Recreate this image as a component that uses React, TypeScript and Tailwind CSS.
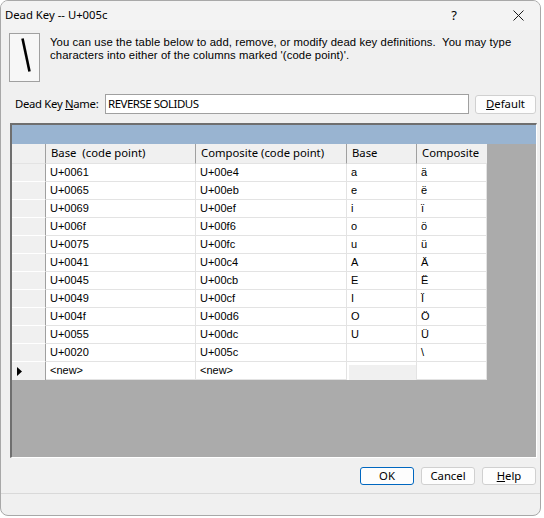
import React from 'react';

const rows = [
  { base: 'U+0061', comp: 'U+00e4', b: 'a', c: 'ä' },
  { base: 'U+0065', comp: 'U+00eb', b: 'e', c: 'ë' },
  { base: 'U+0069', comp: 'U+00ef', b: 'i', c: 'ï' },
  { base: 'U+006f', comp: 'U+00f6', b: 'o', c: 'ö' },
  { base: 'U+0075', comp: 'U+00fc', b: 'u', c: 'ü' },
  { base: 'U+0041', comp: 'U+00c4', b: 'A', c: 'Ä' },
  { base: 'U+0045', comp: 'U+00cb', b: 'E', c: 'Ë' },
  { base: 'U+0049', comp: 'U+00cf', b: 'I', c: 'Ï' },
  { base: 'U+004f', comp: 'U+00d6', b: 'O', c: 'Ö' },
  { base: 'U+0055', comp: 'U+00dc', b: 'U', c: 'Ü' },
  { base: 'U+0020', comp: 'U+005c', b: '', c: '\\' },
];

function Cell({ w, children }: { w: string; children?: React.ReactNode }) {
  return (
    <div className={`${w} h-full flex items-center pl-[4px] bg-white border-b border-r border-[#e3e3e3]`}>
      {children}
    </div>
  );
}

function HeaderCell({ w, children }: { w: string; children?: React.ReactNode }) {
  return (
    <div className={`${w} h-full flex items-center pl-[5px] bg-[#f0f0f0] border-r border-[#a0a0a0] border-b border-b-[#e3e3e3]`}>
      {children}
    </div>
  );
}

export default function App() {
  return (
    <div className="w-[544px] h-[518px] bg-white" style={{ fontFamily: '"Noto Sans", sans-serif' }}>
      <div className="w-[541px] h-[516px] bg-[#f0f0f0] border border-[#a8a8a8] rounded-lg overflow-hidden flex flex-col text-[11.3px] text-black">
        {/* Title bar */}
        <div className="h-[29px] flex items-center bg-[#f3f3f3] shrink-0">
          <span className="ml-[4px]">Dead Key -- U+005c</span>
          <span className="ml-auto mr-[56px] text-[13px]">?</span>
          <svg width="11" height="11" viewBox="0 0 11 11" className="mr-[16px]">
            <path d="M0.5 0.5 L10.5 10.5 M10.5 0.5 L0.5 10.5" stroke="#1a1a1a" strokeWidth="1" />
          </svg>
        </div>

        {/* Intro */}
        <div className="flex mt-[3px]">
          <div className="ml-[8px] w-[31px] h-[49px] border border-[#a0a0a0] bg-[#f7f7f7] flex items-center justify-center shrink-0">
            <svg width="10" height="34" viewBox="0 0 10 34" className="mt-[-6px] ml-[2px]">
              <path d="M1.5 0.5 L8.5 33.5" stroke="#000" strokeWidth="2.6" />
            </svg>
          </div>
          <div
            className="ml-[10px] mt-[3px] whitespace-nowrap text-[11.3px] tracking-[0.1px]"
            style={{ fontFamily: '"Liberation Sans", sans-serif' }}
          >
            <div className="h-[13px] leading-[13px]">
              You can use the table below to add, remove, or modify dead key definitions.&nbsp; You may type
            </div>
            <div className="h-[13px] leading-[13px]">characters into either of the columns marked '(code point)'.</div>
          </div>
        </div>

        {/* Name row */}
        <div className="flex items-center mt-[12px] h-[20px]">
          <span className="ml-[14px] w-[90px] whitespace-nowrap tracking-[-0.3px]">
            Dead Key <span className="underline">N</span>ame:
          </span>
          <div className="w-[364px] h-[20px] bg-white border border-[#a0a0a0] flex items-center pl-[2px] text-[11.5px] tracking-[-0.5px]">
            REVERSE SOLIDUS
          </div>
          <button className="ml-[6px] w-[61px] h-[19px] bg-[#fdfdfd] border border-[#d0d0d0] rounded-[3px] flex items-center justify-center">
            <span><span className="underline">D</span>efault</span>
          </button>
        </div>

        {/* Grid */}
        <div className="ml-[9px] mt-[9px] w-[527px] h-[335px] border-l-2 border-t-2 border-l-[#6f6f6f] border-t-[#6f6f6f] border-r border-b border-r-white border-b-white flex flex-col text-[11px]" style={{ fontFamily: '"Liberation Sans", sans-serif' }}>
          <div className="h-[19px] bg-[#99b4d1] shrink-0" />
          <div className="flex-1 bg-[#ababab]">
            <div className="w-[475px] flex h-[20px]" style={{ fontFamily: '"Noto Sans", sans-serif', fontSize: '11.3px' }}>
              <div className="w-[34px] h-full bg-[#f0f0f0] border-r border-[#a0a0a0] border-b border-b-[#e3e3e3]" />
              <HeaderCell w="w-[150px]">Base&nbsp; (code point)</HeaderCell>
              <HeaderCell w="w-[151px]">Composite (code point)</HeaderCell>
              <HeaderCell w="w-[70px]">Base</HeaderCell>
              <div className="w-[70px] h-full flex items-center pl-[5px] bg-[#f0f0f0] border-b border-[#e3e3e3]">Composite</div>
            </div>
            {rows.map((r) => (
              <div key={r.base} className="w-[475px] flex h-[18px]">
                <div className="w-[34px] h-full bg-[#f0f0f0] border-r border-[#a0a0a0] border-b border-b-white" />
                <Cell w="w-[150px]">{r.base}</Cell>
                <Cell w="w-[151px]">{r.comp}</Cell>
                <Cell w="w-[70px]">{r.b}</Cell>
                <Cell w="w-[70px]">{r.c}</Cell>
              </div>
            ))}
            <div className="w-[475px] flex h-[18px]">
              <div className="w-[34px] h-full bg-[#f0f0f0] border-r border-[#a0a0a0] flex items-center pl-[5px]">
                <svg width="5" height="9" viewBox="0 0 5 9">
                  <path d="M0 0 L5 4.5 L0 9 Z" fill="#000" />
                </svg>
              </div>
              <Cell w="w-[150px]">&lt;new&gt;</Cell>
              <Cell w="w-[151px]">&lt;new&gt;</Cell>
              <div className="w-[70px] h-full bg-white border-r border-[#e3e3e3] pl-[2px] pt-[3px]">
                <div className="w-[67px] h-[15px] bg-[#f0f0f0]" />
              </div>
              <Cell w="w-[70px]" />
            </div>
          </div>
        </div>

        {/* Buttons */}
        <div className="flex justify-end mt-[9px] mr-[4px] gap-[7px]">
          <button className="w-[54px] h-[18px] bg-[#fdfdfd] border border-[#0067c0] rounded-[3px] flex items-center justify-center">OK</button>
          <button className="w-[54px] h-[18px] bg-[#fdfdfd] border border-[#d0d0d0] rounded-[3px] flex items-center justify-center">Cancel</button>
          <button className="w-[54px] h-[18px] bg-[#fdfdfd] border border-[#d0d0d0] rounded-[3px] flex items-center justify-center">
            <span><span className="underline">H</span>elp</span>
          </button>
        </div>

        <div className="mt-[8px] border-t border-[#d9d9d9]" />
      </div>
    </div>
  );
}
